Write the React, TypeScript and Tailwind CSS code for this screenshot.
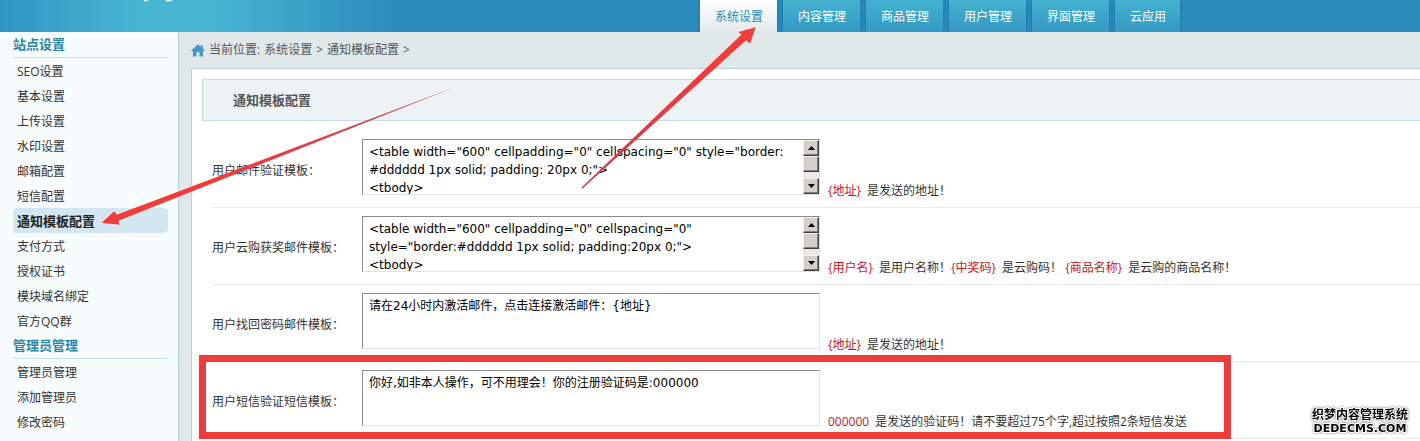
import clsx from "clsx";
import type { ReactNode } from "react";

const TABS = [
  "系统设置",
  "内容管理",
  "商品管理",
  "用户管理",
  "界面管理",
  "云应用",
];

const MENU = [
  {
    title: "站点设置",
    items: [
      "SEO设置",
      "基本设置",
      "上传设置",
      "水印设置",
      "邮箱配置",
      "短信配置",
      "通知模板配置",
      "支付方式",
      "授权证书",
      "模块域名绑定",
      "官方QQ群",
    ],
  },
  {
    title: "管理员管理",
    items: ["管理员管理", "添加管理员", "修改密码"],
  },
];

const ACTIVE_TAB = "系统设置";
const ACTIVE_ITEM = "通知模板配置";

type Template = {
  id: string;
  label: string;
  value: string;
  scroll?: boolean;
  hint: ReactNode;
};

const Token = ({ children }: { children: ReactNode }) => (
  <span className="mr-1.5 text-[#c8141e]">{children}</span>
);

const TEMPLATES: Template[] = [
  {
    id: "email-verify",
    label: "用户邮件验证模板：",
    value:
      '<table width="600" cellpadding="0" cellspacing="0" style="border:\n#dddddd 1px solid; padding: 20px 0;">\n<tbody>',
    scroll: true,
    hint: (
      <>
        <Token>{"{地址}"}</Token>是发送的地址！
      </>
    ),
  },
  {
    id: "email-prize",
    label: "用户云购获奖邮件模板：",
    value:
      '<table width="600" cellpadding="0" cellspacing="0"\nstyle="border:#dddddd 1px solid; padding:20px 0;">\n<tbody>',
    scroll: true,
    hint: (
      <>
        <Token>{"{用户名}"}</Token>是用户名称！
        <Token>{"{中奖码}"}</Token>是云购码！{" "}
        <Token>{"{商品名称}"}</Token>是云购的商品名称！
      </>
    ),
  },
  {
    id: "email-password",
    label: "用户找回密码邮件模板：",
    value: "请在24小时内激活邮件，点击连接激活邮件：{地址}",
    hint: (
      <>
        <Token>{"{地址}"}</Token>是发送的地址！
      </>
    ),
  },
  {
    id: "sms-verify",
    label: "用户短信验证短信模板：",
    value: "你好,如非本人操作，可不用理会！你的注册验证码是:000000",
    hint: (
      <>
        <Token>000000</Token>是发送的验证码！请不要超过75个字,超过按照2条短信发送
      </>
    ),
  },
];

const HomeIcon = (
  <svg
    xmlns="http://www.w3.org/2000/svg"
    width="14"
    height="13"
    viewBox="0 0 14 13"
    fill="#4797c9"
    aria-hidden="true"
  >
    <path d="M7 0.3 0.2 6.6 1.2 7.6 2 7V12.4H5.5V8.2H8.5V12.4H12V7L12.8 7.6 13.8 6.6 11.8 4.7V1.3H9.9V3Z" />
  </svg>
);

function ScrollButton({ up = false }: { up?: boolean }) {
  return (
    <button
      type="button"
      aria-label={up ? "向上" : "向下"}
      className="flex h-4 w-4 items-center justify-center border border-t-[#f2f0ea] border-l-[#f2f0ea] border-r-[#404040] border-b-[#404040] bg-[#d4d0c8] shadow-[inset_-1px_-1px_0_#808080]"
    >
      <svg width="7" height="4" viewBox="0 0 7 4" aria-hidden="true">
        <path d={up ? "M3.5 0 7 4H0Z" : "M0 0H7L3.5 4Z"} fill="#000" />
      </svg>
    </button>
  );
}

function ScrollBar() {
  return (
    <div className="flex w-4 shrink-0 flex-col bg-[#ebe9e4]">
      <ScrollButton up />
      <div className="h-4 border border-t-[#f2f0ea] border-l-[#f2f0ea] border-r-[#404040] border-b-[#404040] bg-[#d4d0c8] shadow-[inset_-1px_-1px_0_#808080]" />
      <div className="flex-1" />
      <ScrollButton />
    </div>
  );
}

function TemplateRow({ id, label, value, scroll, hint }: Template) {
  return (
    <div className="flex items-start border-b border-[#e9ecee] pt-2 pb-2">
      <label
        htmlFor={id}
        className="flex h-14 w-[150px] shrink-0 items-center pt-2"
      >
        {label}
      </label>
      <div className="mb-1 flex h-14 w-[458px] shrink-0 border border-t-[#8a8a8a] border-l-[#8a8a8a] border-r-[#dfe3e6] border-b-[#dfe3e6] bg-white">
        <textarea
          id={id}
          defaultValue={value}
          className="min-w-0 flex-1 resize-none overflow-hidden px-1.5 pt-[3px] font-['DejaVu_Sans','Noto_Sans_CJK_SC',sans-serif] text-xs leading-[18px] text-black outline-none"
        />
        {scroll && <ScrollBar />}
      </div>
      <p className="self-end pl-2 leading-4">{hint}</p>
    </div>
  );
}

function Header() {
  return (
    <header className="flex h-8 overflow-hidden bg-[linear-gradient(90deg,#3095c4_0px,#48b5d2_140px,#48b5d2_210px,#2b8bbc_400px,#2b8bbc_100%)]">
      {/* Bottom edge of the logo */}
      <div className="w-[700px] shrink-0">
        <svg width="200" height="6" viewBox="0 0 200 6" aria-hidden="true">
          <path
            d="M144 0H149L146 1.5H144ZM165 0H173L170 1.5H167Z"
            fill="#e8f7fa"
          />
        </svg>
      </div>
      <nav className="flex gap-1.5">
        {TABS.map((tab) => (
          <a
            key={tab}
            href="#"
            className={clsx(
              "flex items-center pt-0.5 pr-[14px] pl-[15px] shadow-[0_0_3px_#1a6f9f]",
              tab === ACTIVE_TAB
                ? "bg-gradient-to-b from-white to-[#e3eaeb] text-[#2a88ad]"
                : "bg-gradient-to-b from-[#45b2d0] to-[#3498c3] text-white"
            )}
          >
            {tab}
          </a>
        ))}
      </nav>
    </header>
  );
}

function Sidebar() {
  return (
    <aside className="w-[179px] shrink-0 border-r border-[#b5d0d8] bg-[#f7fcfc] pr-2.5 pl-[13px]">
      {MENU.map((group) => (
        <section key={group.title}>
          <h2 className="flex h-[26px] items-center border-b border-[#bfe0e8] text-[13px] font-bold text-[#2a86a8]">
            {group.title}
          </h2>
          <ul>
            {group.items.map((item) => (
              <li key={item}>
                <a
                  href="#"
                  className={clsx(
                    "flex h-[25px] items-center rounded px-1 pt-0.5",
                    item === ACTIVE_ITEM
                      ? "bg-[#d3e7f1] text-[13px] font-bold text-[#222]"
                      : "text-[#333]"
                  )}
                >
                  {item}
                </a>
              </li>
            ))}
          </ul>
        </section>
      ))}
    </aside>
  );
}

/* Red arrows and the frame around the SMS template */
function Annotations() {
  return (
    <svg
      className="pointer-events-none absolute top-0 left-0"
      width="1420"
      height="441"
      viewBox="0 0 1420 441"
      aria-hidden="true"
    >
      <defs>
        <linearGradient
          id="arrow-left"
          gradientUnits="userSpaceOnUse"
          x1="102"
          y1="222"
          x2="456"
          y2="87"
        >
          <stop offset="0.3" stopColor="#f33b3a" />
          <stop offset="1" stopColor="#c04a52" />
        </linearGradient>
        <linearGradient
          id="arrow-top"
          gradientUnits="userSpaceOnUse"
          x1="756"
          y1="27"
          x2="582"
          y2="188"
        >
          <stop offset="0.3" stopColor="#f33b3a" />
          <stop offset="1" stopColor="#bd4450" />
        </linearGradient>
      </defs>
      <path
        d="M101.7 222.7 114.3 211.2 116.8 214.8 455.7 86.7 118.4 220.8 119.8 224.8Z"
        fill="url(#arrow-left)"
      />
      <path
        d="M755.7 27.3 738.3 32 741.5 34.6 581.3 187.8 582.3 188.8 746 40.2 750 43.8Z"
        fill="url(#arrow-top)"
      />
      <rect
        x="202.5"
        y="358.5"
        width="1025"
        height="77"
        fill="none"
        stroke="#ef3c3a"
        strokeWidth="7"
      />
    </svg>
  );
}

function Watermark() {
  return (
    <div className="absolute right-3 bottom-1.5 text-center leading-4 text-black [paint-order:stroke_fill] [-webkit-text-stroke:2px_white] drop-shadow-[0_0_1px_#777]">
      <div className="text-xs font-bold">织梦内容管理系统</div>
      <div className="font-['DejaVu_Sans',sans-serif] text-[11px] leading-3 font-bold">
        DEDECMS.COM
      </div>
    </div>
  );
}

export default function App() {
  return (
    <div className="relative flex min-h-screen flex-col overflow-hidden bg-[#e1e8ea] font-['Open_Sans','Noto_Sans_CJK_SC',sans-serif] text-xs text-[#333]">
      <Header />
      <div className="flex flex-1">
        <Sidebar />
        <main className="flex min-w-0 flex-1 flex-col pl-3">
          <div className="flex h-9 items-center gap-1 text-[#555]">
            {HomeIcon}
            <span>当前位置:</span>
            <span>系统设置</span>
            <span>&gt;</span>
            <span>通知模板配置</span>
            <span>&gt;</span>
          </div>
          <div className="flex-1 border-t border-l border-[#b9d3dc] bg-white pt-2.5 pl-2.5">
            <h1 className="mb-2.5 flex h-[42px] items-center border border-r-0 border-[#c9dbe2] bg-[#edf2f6] px-[30px] pt-0.5 text-[13px] font-bold text-[#555]">
              通知模板配置
            </h1>
            <form className="pl-2.5">
              {TEMPLATES.map((template) => (
                <TemplateRow key={template.id} {...template} />
              ))}
            </form>
          </div>
        </main>
      </div>
      <Annotations />
      <Watermark />
    </div>
  );
}
